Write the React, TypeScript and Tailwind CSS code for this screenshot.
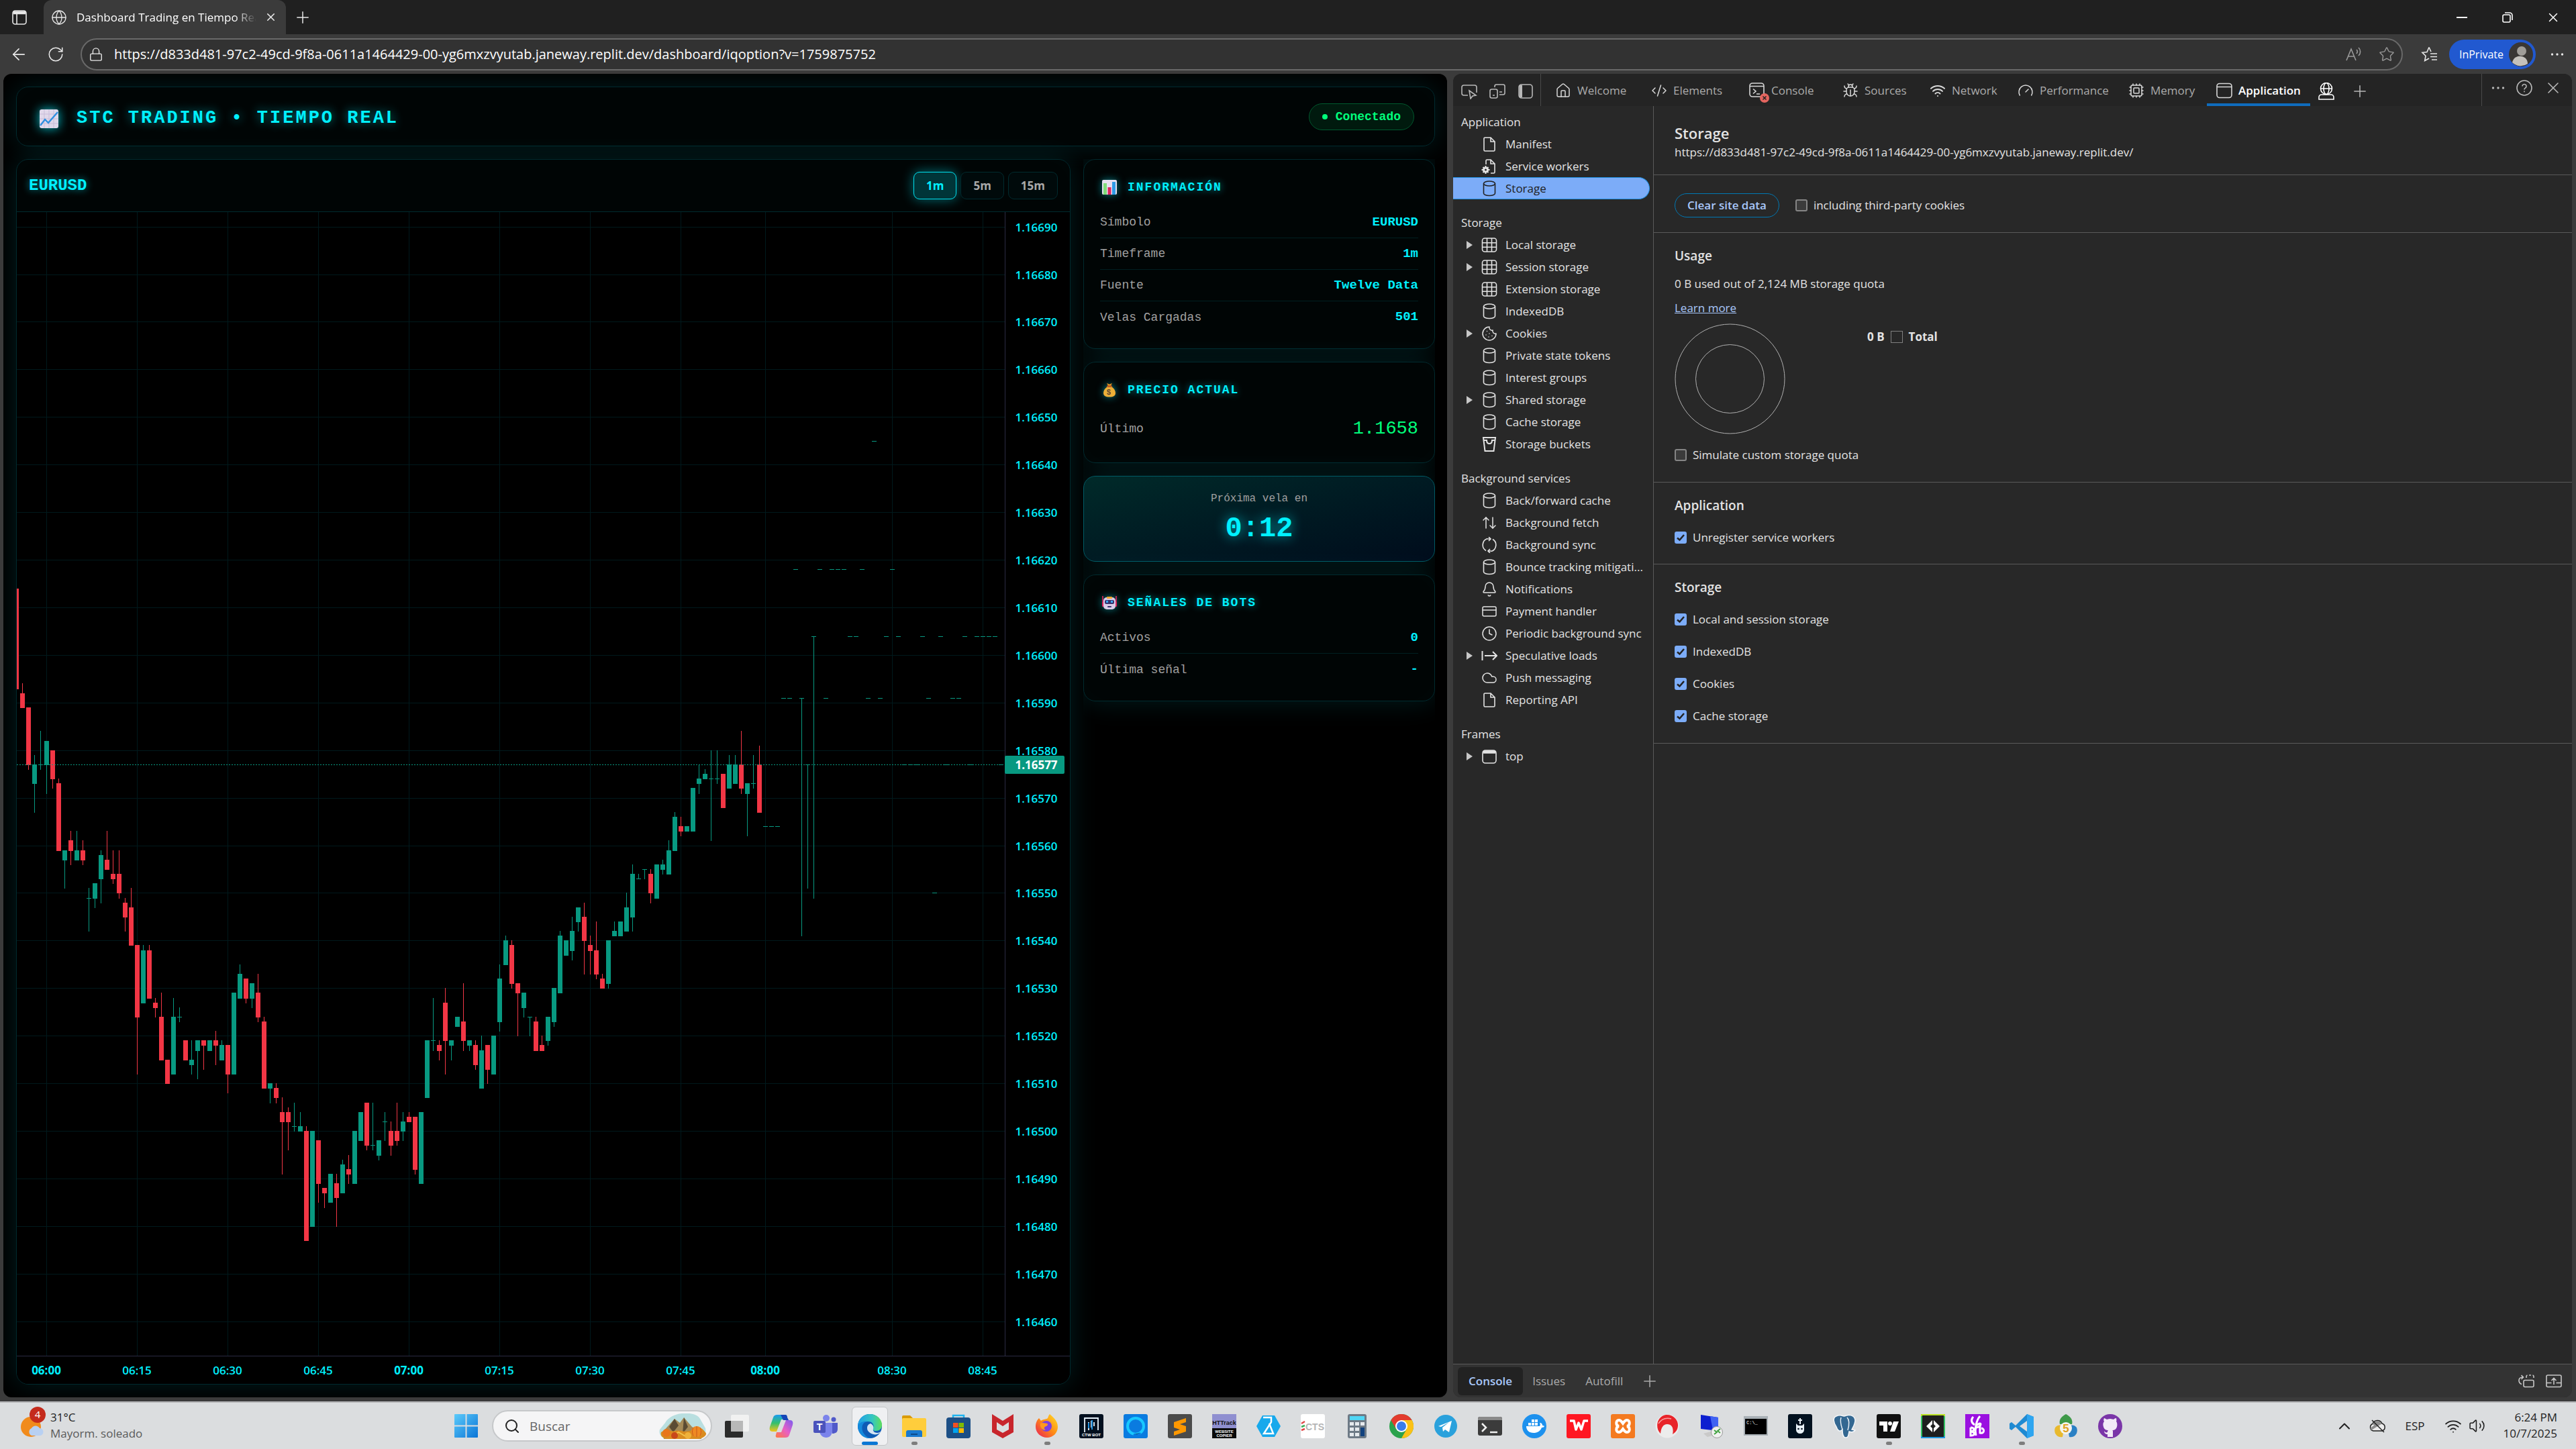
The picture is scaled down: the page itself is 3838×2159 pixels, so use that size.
import { useId, type ReactNode } from "react";
import {
  ArrowDownUp,
  ArrowLeft,
  Bell,
  Bug,
  ChevronUp,
  Clock,
  Cloud,
  CodeXml,
  Cookie,
  Cpu,
  CreditCard,
  Gauge,
  Globe,
  House,
  Lock,
  Plus,
  RotateCw,
  Search,
  Star,
  Volume2,
  Wifi,
  X,
} from "lucide-react";

/* ------------------------------------------------------------------ */
/* Candle data: [high, bodyTop, bodyBottom, low, direction] in points  */
/* above 1.16000. Direction 1 is up, 0 is down.                        */
/* ------------------------------------------------------------------ */
type Candle = [number, number, number, number, 0 | 1];

const FIRST_BAR = -5;
const flat = (v: number): Candle => [v, v, v, v, 1];

const CANDLES: Candle[] = [
  [614, 614, 593, 592, 0], [594, 592, 589, 589, 0], [589, 589, 577, 576, 0], [579, 577, 573, 567, 1],
  [584, 577, 577, 576, 1], [582, 582, 577, 571, 1], [580, 580, 574, 572, 0], [574, 573, 559, 559, 0],
  [559, 559, 557, 551, 1], [563, 561, 559, 556, 0], [563, 559, 557, 557, 1], [561, 559, 557, 556, 0],
  [551, 549, 549, 542, 1], [552, 552, 549, 547, 1], [559, 558, 553, 548, 1], [563, 557, 555, 555, 0],
  [559, 554, 553, 552, 0], [559, 554, 550, 549, 0], [549, 548, 545, 542, 0], [551, 547, 539, 539, 0],
  [539, 539, 524, 512, 0], [539, 538, 527, 527, 1], [539, 538, 528, 528, 0], [528, 527, 526, 524, 0],
  [529, 524, 515, 515, 0], [515, 515, 510, 510, 0], [528, 524, 512, 512, 1], [526, 524, 524, 523, 1],
  [519, 519, 515, 515, 0], [519, 515, 514, 512, 1], [519, 519, 517, 511, 1], [519, 519, 518, 513, 0],
  [519, 519, 517, 517, 1], [521, 519, 518, 514, 0], [519, 518, 515, 515, 1], [518, 518, 512, 508, 0],
  [529, 529, 512, 512, 1], [535, 533, 528, 528, 1], [532, 532, 528, 527, 0], [531, 531, 528, 526, 1],
  [533, 529, 524, 523, 0], [524, 523, 509, 509, 0], [510, 510, 509, 506, 1], [510, 509, 507, 506, 0],
  [507, 504, 502, 491, 0], [505, 504, 502, 496, 0], [506, 501, 501, 500, 1], [504, 501, 500, 500, 1],
  [501, 500, 477, 477, 0], [500, 500, 480, 480, 1], [498, 498, 489, 485, 0], [488, 488, 487, 484, 0],
  [491, 491, 485, 485, 1], [491, 489, 486, 480, 0], [494, 493, 487, 487, 1], [495, 492, 491, 489, 0],
  [500, 500, 489, 489, 1], [504, 504, 498, 498, 1], [506, 506, 497, 496, 0], [506, 497, 497, 496, 1],
  [498, 498, 495, 494, 1], [504, 502, 502, 498, 1], [502, 500, 497, 495, 0], [506, 500, 498, 497, 0],
  [504, 502, 500, 498, 1], [504, 503, 502, 502, 0], [503, 503, 492, 491, 0], [504, 504, 489, 489, 1],
  [519, 519, 507, 507, 1], [528, 519, 519, 517, 1], [519, 518, 517, 515, 0], [530, 527, 519, 512, 0],
  [519, 519, 518, 515, 1], [524, 524, 522, 522, 1], [531, 523, 519, 517, 0], [519, 519, 518, 517, 1],
  [519, 518, 514, 513, 0], [520, 517, 509, 509, 1], [518, 518, 513, 510, 0], [520, 520, 512, 512, 1],
  [535, 532, 523, 521, 1], [541, 540, 535, 535, 1], [540, 539, 531, 530, 0], [531, 531, 529, 520, 0],
  [529, 529, 526, 524, 1], [524, 524, 524, 520, 1], [524, 523, 517, 517, 0], [520, 518, 517, 517, 0],
  [524, 524, 519, 518, 1], [530, 530, 523, 522, 1], [542, 541, 529, 529, 1], [540, 540, 537, 537, 1],
  [545, 542, 538, 536, 1], [547, 547, 544, 542, 1], [548, 545, 540, 533, 0], [541, 539, 538, 533, 0],
  [544, 538, 533, 532, 0], [533, 532, 530, 530, 0], [540, 540, 531, 530, 1], [544, 542, 541, 541, 1],
  [544, 544, 541, 541, 1], [550, 547, 542, 542, 1], [556, 554, 545, 542, 1], [554, 553, 553, 553, 1],
  [555, 555, 555, 553, 1], [555, 554, 550, 548, 0], [556, 556, 549, 549, 1], [557, 556, 555, 554, 1],
  [561, 559, 554, 554, 1], [567, 566, 559, 559, 1], [566, 564, 563, 562, 0], [564, 564, 563, 563, 1],
  [572, 572, 563, 563, 1], [577, 574, 573, 571, 1], [576, 575, 574, 574, 1], [580, 574, 574, 561, 1],
  [580, 574, 574, 573, 1], [575, 575, 568, 568, 0], [579, 577, 572, 572, 1], [579, 577, 573, 573, 1],
  [584, 577, 572, 571, 0], [573, 573, 571, 562, 1], [579, 573, 573, 572, 1], [581, 577, 567, 567, 0],
  flat(564), flat(564), flat(564), flat(591), flat(591), flat(618),
  [591, 591, 591, 541, 1], [577, 577, 577, 551, 1], [604, 604, 604, 549, 1],
  ...[618, 591, 618, 618, 618, 604, 604, 618, 591, 645, 591, 604, 618, 604, 577, 577, 577, 604, 591, 550, 604, 577, 591, 591, 604, 577, 604, 604, 604, 604, 577].map(flat),
];

const TIMES: { bar: number; label: string; strong?: boolean }[] = [
  { bar: 0, label: "06:00", strong: true },
  { bar: 15, label: "06:15" },
  { bar: 30, label: "06:30" },
  { bar: 45, label: "06:45" },
  { bar: 60, label: "07:00", strong: true },
  { bar: 75, label: "07:15" },
  { bar: 90, label: "07:30" },
  { bar: 105, label: "07:45" },
  { bar: 119, label: "08:00", strong: true },
  { bar: 140, label: "08:30" },
  { bar: 155, label: "08:45" },
];

const PRICES = Array.from({ length: 24 }, (_, i) => 690 - i * 10);
const UP = "#089981";
const DOWN = "#f23645";
const PLOT_W = 1472;
const PLOT_H = 1704;
const barX = (bar: number) => 44 + bar * 9;
const priceY = (v: number) => Math.round(21.6 + (690 - v) * 7.092);

function PriceChart() {
  return (
    <svg className="h-full w-full font-['Open_Sans',sans-serif] text-[17px] font-semibold" role="img" aria-label="EURUSD 1m">
      <g stroke="#00191c" strokeWidth="1" shapeRendering="crispEdges">
        {PRICES.map((p) => (
          <line key={p} x1="0" x2={PLOT_W} y1={priceY(p) + 0.5} y2={priceY(p) + 0.5} />
        ))}
        {TIMES.map((t) => (
          <line key={t.label} x1={barX(t.bar) + 0.5} x2={barX(t.bar) + 0.5} y1="0" y2={PLOT_H} />
        ))}
      </g>
      <g shapeRendering="crispEdges">
        {CANDLES.map(([h, top, bottom, l, up], i) => {
          const x = barX(i + FIRST_BAR);
          const fill = up ? UP : DOWN;
          return (
            <g key={i} fill={fill}>
              <rect x={x} y={priceY(h)} width="1" height={priceY(l) - priceY(h) + 1} />
              <rect x={x - 3} y={priceY(top)} width="7" height={priceY(bottom) - priceY(top) + 1} />
            </g>
          );
        })}
        <line x1="0" x2={PLOT_W} y1={priceY(577) + 0.5} y2={priceY(577) + 0.5} stroke={UP} strokeDasharray="2 2" />
        <rect x={PLOT_W} y="0" width="1" height={PLOT_H} fill="#2b2b43" />
        <rect x="0" y={PLOT_H} width="1569" height="1" fill="#2b2b43" />
      </g>
      <g fill="#00f0ff" dominantBaseline="central" textAnchor="middle">
        {PRICES.map((p) => (
          <text key={p} x="1519" y={priceY(p)}>{`1.16${p}`}</text>
        ))}
        {TIMES.map((t) => (
          <text key={t.label} x={barX(t.bar)} y="1725" className={t.strong ? "font-bold" : ""}>
            {t.label}
          </text>
        ))}
        <rect x={PLOT_W} y="810" width="89" height="27" rx="2" fill={UP} />
        <text x="1519" y="823" fill="#ffffff" className="font-bold">1.16577</text>
      </g>
    </svg>
  );
}

/* ----------------------------- emoji -------------------------------- */
function TrendEmoji() {
  return (
    <svg viewBox="0 0 28 28" className="size-7 drop-shadow-[0_0_8px_rgba(0,240,255,0.8)]" aria-hidden="true">
      <rect width="28" height="28" rx="3" fill="#e0d8ea" />
      <path d="M0 7h28M0 14h28M0 21h28M7 0v28M14 0v28M21 0v28" stroke="#c9bdd8" strokeWidth="1" />
      <path d="M1 24l7-9 5 5L27 4" fill="none" stroke="#2f8fe0" strokeWidth="2.4" />
    </svg>
  );
}
function BarsEmoji() {
  return (
    <svg viewBox="0 0 22 22" className="size-[22px]" aria-hidden="true">
      <rect width="22" height="22" rx="2" fill="#e6dff0" />
      <rect x="2" y="5" width="5" height="17" fill="#7fdc7a" />
      <rect x="8.500" y="11" width="5" height="11" fill="#e0245e" />
      <rect x="15" y="3" width="5" height="19" fill="#2f9be6" />
    </svg>
  );
}
function MoneyEmoji() {
  return (
    <svg viewBox="0 0 22 22" className="size-[22px]" aria-hidden="true">
      <path d="M7 1l4 1.500L15 1l-2 4H9z" fill="#e08a1c" />
      <path d="M8 6h6c4 3 6 6 6 9.500 0 4-3 6-9 6s-9-2-9-6C2 12 4 9 8 6z" fill="#f6ac2f" />
      <rect x="7" y="4.500" width="8" height="2.500" rx="1" fill="#c4581a" />
      <text x="11" y="18" textAnchor="middle" fontSize="11" fontWeight="700" fill="#5b4332" fontFamily="Liberation Sans">$</text>
    </svg>
  );
}
function RobotEmoji() {
  return (
    <svg viewBox="0 0 22 22" className="size-[22px]" aria-hidden="true">
      <path d="M1 1v8M21 1v8" stroke="#e0245e" strokeWidth="1.600" />
      <rect x="0" y="9" width="3" height="8" rx="1" fill="#e0245e" />
      <rect x="19" y="9" width="3" height="8" rx="1" fill="#e0245e" />
      <rect x="2" y="3" width="18" height="18" rx="5" fill="#d8cbe8" />
      <rect x="7" y="2" width="8" height="3" rx="1" fill="#f4a72c" />
      <rect x="4" y="7" width="14" height="6" rx="2" fill="#37306b" />
      <rect x="6" y="8" width="3" height="3" fill="#3ba7f5" />
      <rect x="13" y="8" width="3" height="3" fill="#3ba7f5" />
      <rect x="8" y="16" width="6" height="2" rx="1" fill="#37306b" />
    </svg>
  );
}

/* --------------------------- dashboard ------------------------------ */
const cardClass =
  "rounded-[18px] border border-[#002a2e] bg-[#000505] shadow-[0_0_40px_rgba(0,240,255,0.12),inset_0_0_40px_rgba(0,240,255,0.015)]";

function Row({ label, value, last, big }: { label: string; value: string; last?: boolean; big?: boolean }) {
  return (
    <div className={`flex items-center justify-between ${big ? "h-14 pt-0.5" : "h-[47px]"} ${last ? "" : "border-b border-[#001f21]"}`}>
      <dt className="text-lg text-[#a0a0a0]">{label}</dt>
      {big ? (
        <dd className="text-[27px] text-[#00ff7b]">{value}</dd>
      ) : (
        <dd className="text-[19px] font-bold text-[#00f0ff]">{value}</dd>
      )}
    </div>
  );
}

function InfoCard({ icon, title, children }: { icon: ReactNode; title: string; children: ReactNode }) {
  return (
    <section className={`${cardClass} px-6 pt-6 pb-[23px]`}>
      <h2 className="mb-[19px] flex h-[27px] items-center gap-4 pl-[3px] pt-1.5 text-lg font-bold tracking-[2px] text-[#00f0ff] [text-shadow:0_0_12px_rgba(0,240,255,0.6)]">
        <span className="drop-shadow-[0_0_6px_rgba(0,240,255,0.5)]">{icon}</span>
        {title}
      </h2>
      <dl>{children}</dl>
    </section>
  );
}

function TimeButton({ label, active }: { label: string; active?: boolean }) {
  return (
    <button
      type="button"
      className={`h-[41px] rounded-[9px] border px-[18px] text-[17px] font-bold font-['Open_Sans',sans-serif] ${
        active
          ? "border-[#00e0ee] bg-[#003538] text-[#00f0ff] shadow-[0_0_18px_rgba(0,240,255,0.45)]"
          : "border-[#002a2e] bg-[#000a0b] text-[#a8a8a8]"
      }`}
    >
      {label}
    </button>
  );
}

function Dashboard() {
  return (
    <main className="flex min-h-0 min-w-0 flex-col gap-[19px] overflow-hidden rounded-xl bg-black p-[19px] pr-[18px] font-['Liberation_Mono',monospace]">
      <header className={`${cardClass} flex h-[89px] shrink-0 items-center justify-between px-[30px]`}>
        <h1 className="flex items-center gap-[27px] pl-1 pt-1.5 text-[27px] font-bold tracking-[3px] text-[#00f0ff] [text-shadow:0_0_15px_rgba(0,240,255,0.6)]">
          <TrendEmoji />
          STC TRADING • TIEMPO REAL
        </h1>
        <p className="flex h-10 items-center gap-3 rounded-full border border-[#00592f] bg-[#001a0e] px-[19px] text-lg font-bold text-[#00ff7b]">
          <span className="size-2 rounded-full bg-[#00ff7b]" />
          Conectado
        </p>
      </header>

      <div className="flex min-h-0 flex-1 gap-[19px]">
        <section className={`${cardClass} flex min-w-0 flex-1 flex-col overflow-hidden`}>
          <div className="flex h-[78px] shrink-0 items-center justify-between border-b border-[#002a2e] px-[18px]">
            <h2 className="text-2xl font-bold text-[#00f0ff] [text-shadow:0_0_12px_rgba(0,240,255,0.6)]">EURUSD</h2>
            <div className="flex gap-1.5">
              <TimeButton label="1m" active />
              <TimeButton label="5m" />
              <TimeButton label="15m" />
            </div>
          </div>
          <div className="min-h-0 flex-1 bg-black">
            <PriceChart />
          </div>
        </section>

        <aside className="flex min-h-0 w-[524px] flex-col gap-[19px] overflow-hidden">
          <InfoCard icon={<BarsEmoji />} title="INFORMACIÓN">
            <Row label="Símbolo" value="EURUSD" />
            <Row label="Timeframe" value="1m" />
            <Row label="Fuente" value="Twelve Data" />
            <Row label="Velas Cargadas" value="501" last />
          </InfoCard>
          <InfoCard icon={<MoneyEmoji />} title="PRECIO ACTUAL">
            <Row label="Último" value="1.1658" last big />
          </InfoCard>
          <section className="flex h-32 flex-col items-center rounded-[18px] border border-[#005a64] bg-linear-to-br from-[#002a29] to-[#000c1c] pt-[21px] shadow-[0_0_40px_rgba(0,240,255,0.12)]">
            <p className="text-base text-[#a0a0a0]">Próxima vela en</p>
            <p className="text-[42px] leading-[66px] font-bold text-[#00f0ff] [text-shadow:0_0_18px_rgba(0,240,255,0.7)]">0:12</p>
          </section>
          <InfoCard icon={<RobotEmoji />} title="SEÑALES DE BOTS">
            <Row label="Activos" value="0" />
            <Row label="Última señal" value="-" last />
          </InfoCard>
        </aside>
      </div>
    </main>
  );
}

/* --------------------------- dev tools ------------------------------ */
const stroke = { fill: "none", stroke: "currentColor", strokeWidth: 1.6 } as const;

const FileIcon = () => (
  <svg viewBox="0 0 24 24" className="size-6" {...stroke}>
    <path d="M4 3.500A1.500 1.500 0 0 1 5.500 2H14l6 6v12.500a1.500 1.500 0 0 1-1.500 1.500h-13A1.500 1.500 0 0 1 4 20.500zM14 2v6h6" />
  </svg>
);
const WorkerIcon = () => (
  <svg viewBox="0 0 24 24" className="size-6" {...stroke}>
    <path d="M7 9V3.500A1.500 1.500 0 0 1 8.500 2H14l6 6v12.500a1.500 1.500 0 0 1-1.500 1.500H14M14 2v6h6" />
    <circle cx="6.500" cy="17" r="3" strokeWidth="3" />
    <path d="M6.500 11v3M6.500 20v3M.5 17h3M9.500 17h3M2.500 13l2 2M8.500 19l2 2M10.500 13l-2 2M4.500 19l-2 2" strokeWidth="2" />
  </svg>
);
const DbIcon = () => (
  <svg viewBox="0 0 24 24" className="size-6" {...stroke}>
    <ellipse cx="12" cy="4.500" rx="8.500" ry="3.500" />
    <path d="M3.500 4.500v14.500c0 2 3.800 3.500 8.500 3.500s8.500-1.500 8.500-3.500V4.500" />
  </svg>
);
const GridIcon = () => (
  <svg viewBox="0 0 24 24" className="size-6" {...stroke}>
    <rect x="1.500" y="2" width="21" height="20" rx="3.500" />
    <path d="M8.500 2v20M15.500 2v20M1.500 8.700h21M1.500 15.300h21" />
  </svg>
);
const BucketIcon = () => (
  <svg viewBox="0 0 24 24" className="size-6" {...stroke}>
    <path d="M3 2h18l-2.500 20h-13zM4 6h4c0 3 1.500 5 4 5s4-2 4-5h4" strokeWidth="2" />
  </svg>
);
const WindowIcon = () => (
  <svg viewBox="0 0 24 24" className="size-6" {...stroke}>
    <rect x="2" y="3" width="20" height="19" rx="4" />
    <path d="M3 5.500h18" strokeWidth="4.500" />
  </svg>
);
const AppTabIcon = () => (
  <svg viewBox="0 0 24 24" className="size-6" {...stroke}>
    <rect x="1" y="1.500" width="22" height="21" rx="4" />
    <path d="M1 6.500h22" />
  </svg>
);
const SpecIcon = () => (
  <svg viewBox="0 0 24 24" className="size-6" {...stroke} strokeWidth="2">
    <path d="M1.500 5v14M5 12h18M17 6l6 6-6 6" />
  </svg>
);
const SyncIcon = () => (
  <svg viewBox="0 0 24 24" className="size-6" {...stroke}>
    <path d="M9 2.500A10 10 0 0 0 7 20.500M15 21.500A10 10 0 0 0 17 3.500M11 0l3 3-3 3M13 18l-3 3 3 3M9 3h5M15 21h-5" />
  </svg>
);

const lu = { className: "size-6", strokeWidth: 1.5 } as const;

type Item = { label: string; icon: ReactNode; arrow?: boolean; selected?: boolean };
const GROUPS: { title: string; items: Item[] }[] = [
  {
    title: "Application",
    items: [
      { label: "Manifest", icon: <FileIcon /> },
      { label: "Service workers", icon: <WorkerIcon /> },
      { label: "Storage", icon: <DbIcon />, selected: true },
    ],
  },
  {
    title: "Storage",
    items: [
      { label: "Local storage", icon: <GridIcon />, arrow: true },
      { label: "Session storage", icon: <GridIcon />, arrow: true },
      { label: "Extension storage", icon: <GridIcon /> },
      { label: "IndexedDB", icon: <DbIcon /> },
      { label: "Cookies", icon: <Cookie {...lu} />, arrow: true },
      { label: "Private state tokens", icon: <DbIcon /> },
      { label: "Interest groups", icon: <DbIcon /> },
      { label: "Shared storage", icon: <DbIcon />, arrow: true },
      { label: "Cache storage", icon: <DbIcon /> },
      { label: "Storage buckets", icon: <BucketIcon /> },
    ],
  },
  {
    title: "Background services",
    items: [
      { label: "Back/forward cache", icon: <DbIcon /> },
      { label: "Background fetch", icon: <ArrowDownUp {...lu} className="size-6 -scale-x-100" /> },
      { label: "Background sync", icon: <SyncIcon /> },
      { label: "Bounce tracking mitigati...", icon: <DbIcon /> },
      { label: "Notifications", icon: <Bell {...lu} /> },
      { label: "Payment handler", icon: <CreditCard {...lu} /> },
      { label: "Periodic background sync", icon: <Clock {...lu} /> },
      { label: "Speculative loads", icon: <SpecIcon />, arrow: true },
      { label: "Push messaging", icon: <Cloud {...lu} /> },
      { label: "Reporting API", icon: <FileIcon /> },
    ],
  },
  { title: "Frames", items: [{ label: "top", icon: <WindowIcon />, arrow: true }] },
];

function Sidebar() {
  return (
    <nav className="flex w-[299px] shrink-0 flex-col gap-[18px] overflow-hidden border-r border-[#5a5a5a] pt-[7px] text-[17px] text-[#e3e3e3]">
      {GROUPS.map((g) => (
        <div key={g.title}>
          <h3 className="flex h-[33px] items-center pl-3">{g.title}</h3>
          <ul>
            {g.items.map((it) => (
              <li
                key={it.label}
                className={`mr-[5px] flex h-[33px] items-center rounded-r-full ${
                  it.selected ? "border-y border-r border-[#1f8fe0] bg-[#7cacf8] text-[#222222]" : ""
                }`}
              >
                <span className="flex w-[42px] justify-center pl-1.5">
                  {it.arrow && (
                    <svg viewBox="0 0 9 12" className="h-3 w-[9px]" aria-hidden="true">
                      <path d="M0 0l9 6-9 6z" fill="#c7c7c7" />
                    </svg>
                  )}
                </span>
                <span className="shrink-0">{it.icon}</span>
                <span className="min-w-0 flex-1 pl-3 whitespace-nowrap">{it.label}</span>
              </li>
            ))}
          </ul>
        </div>
      ))}
    </nav>
  );
}

function Check({ label, checked }: { label: string; checked?: boolean }) {
  const id = useId();
  return (
    <div className="flex h-6 items-center gap-[9px]">
      <span className="relative flex">
        <input
          id={id}
          type="checkbox"
          defaultChecked={checked}
          className="peer size-[18px] appearance-none rounded-[3px] border-2 border-[#858585] bg-[#3b3b3b] checked:border-[#7cacf8] checked:bg-[#7cacf8]"
        />
        <svg viewBox="0 0 18 18" className="pointer-events-none absolute inset-0 hidden size-[18px] peer-checked:block" aria-hidden="true">
          <path d="M4 9.500l3.500 3L14 5" fill="none" stroke="#222" strokeWidth="2.500" />
        </svg>
      </span>
      <label htmlFor={id}>{label}</label>
    </div>
  );
}

function StoragePane() {
  const line = "border-b border-[#5a5a5a] px-[31px]";
  return (
    <div className="min-w-0 flex-1 text-[17px] text-[#e3e3e3]">
      <section className={`${line} pt-6 pb-5`}>
        <h2 className="text-[22px] leading-8 font-semibold">Storage</h2>
        <p className="leading-[26px]">https://d833d481-97c2-49cd-9f8a-0611a1464429-00-yg6mxzvyutab.janeway.replit.dev/</p>
      </section>
      <section className={`${line} flex h-[86px] items-center gap-6 pt-1`}>
        <button type="button" className="h-9 rounded-full border border-[#0078b4] px-[18px] font-semibold text-[#a8c7fa]">
          Clear site data
        </button>
        <Check label="including third-party cookies" />
      </section>
      <section className={`${line} h-[372px] pt-[18px]`}>
        <h3 className="text-[19px] leading-8 font-semibold">Usage</h3>
        <p className="mt-3.5 leading-6">0 B used out of 2,124 MB storage quota</p>
        <a href="#learn" className="mt-3 inline-block leading-6 text-[#a8c7fa] underline">Learn more</a>
        <div className="mt-2.5 flex h-[164px] gap-[122px]">
          <svg viewBox="0 0 165 165" className="size-[165px]" fill="none" stroke="#b0b0b0" aria-hidden="true">
            <circle cx="82.500" cy="82.500" r="81.500" />
            <circle cx="82.500" cy="82.500" r="51" />
          </svg>
          <p className="mt-2 flex h-6 items-center gap-[9px] font-bold">
            0 B <span className="size-[18px] border border-[#808080]" /> Total
          </p>
        </div>
        <div className="mt-5">
          <Check label="Simulate custom storage quota" />
        </div>
      </section>
      <section className={`${line} h-[122px] pt-[18px]`}>
        <h3 className="text-[19px] leading-8 font-semibold">Application</h3>
        <div className="mt-5">
          <Check label="Unregister service workers" checked />
        </div>
      </section>
      <section className={`${line} h-[267px] pt-[18px]`}>
        <h3 className="text-[19px] leading-8 font-semibold">Storage</h3>
        <div className="mt-5 flex flex-col gap-6">
          <Check label="Local and session storage" checked />
          <Check label="IndexedDB" checked />
          <Check label="Cookies" checked />
          <Check label="Cache storage" checked />
        </div>
      </section>
    </div>
  );
}

function Tab({ icon, label, width, active }: { icon: ReactNode; label: string; width: string; active?: boolean }) {
  return (
    <button
      type="button"
      className={`flex h-12 items-center gap-[9px] border-b-4 pt-1.5 pl-3.5 ${width} ${
        active ? "border-[#0f6cbd] font-semibold text-white" : "border-transparent text-[#ababab]"
      }`}
    >
      <span className="text-[#d8d8d8]">{icon}</span>
      {label}
    </button>
  );
}

const ConsoleIcon = () => (
  <span className="relative block">
    <svg viewBox="0 0 24 24" className="size-6" {...stroke}>
      <rect x="1" y="1" width="21" height="20" rx="4" />
      <path d="M1 5.500h21M6 9.500l4 3.500-4 3.500M11 17h5" />
    </svg>
    <svg viewBox="0 0 14 14" className="absolute -right-1.5 -bottom-1.5 size-3.5" aria-hidden="true">
      <circle cx="7" cy="7" r="7" fill="#e4655f" />
      <path d="M4.500 4.500l5 5M9.500 4.500l-5 5" stroke="#222" strokeWidth="1.500" />
    </svg>
  </span>
);
const InspectIcon = () => (
  <svg viewBox="0 0 24 24" className="size-6" {...stroke}>
    <path d="M10 18H4a3 3 0 0 1-3-3V6a3 3 0 0 1 3-3h16a3 3 0 0 1 3 3v8M12 11l10 7-5 1-3 4z" />
  </svg>
);
const DevicesIcon = () => (
  <svg viewBox="0 0 24 24" className="size-6" {...stroke}>
    <rect x="1" y="9" width="11" height="13" rx="2.500" />
    <path d="M8 6V4.500A2.500 2.500 0 0 1 10.500 2h10A2.500 2.500 0 0 1 23 4.500v10a2.500 2.500 0 0 1-2.500 2.500H15M5 18h3M15 13h4" />
  </svg>
);
const DockIcon = () => (
  <svg viewBox="0 0 24 24" className="size-6" {...stroke}>
    <rect x="2" y="2" width="20" height="20" rx="4" />
    <path d="M5 3v18" strokeWidth="4" />
  </svg>
);
const GlobeStandIcon = () => (
  <svg viewBox="0 0 24 26" className="h-[26px] w-6" {...stroke}>
    <circle cx="12" cy="9" r="8.500" />
    <ellipse cx="12" cy="9" rx="4" ry="8.500" />
    <path d="M3.500 9h17M1 25v-3a4 4 0 0 1 4-4h14a4 4 0 0 1 4 4v3z" />
  </svg>
);
const Dots = () => (
  <svg viewBox="0 0 20 6" className="h-1.5 w-5" fill="currentColor" aria-hidden="true">
    <circle cx="2.500" cy="3" r="1.700" />
    <circle cx="10" cy="3" r="1.700" />
    <circle cx="17.500" cy="3" r="1.700" />
  </svg>
);

function DevTools() {
  return (
    <section className="flex min-h-0 min-w-0 flex-col overflow-hidden rounded-xl bg-[#282828]" aria-label="DevTools">
      <div className="flex h-12 shrink-0 items-center bg-[#242424] text-[17px] text-[#b8b8b8]">
        <div className="flex h-full items-center gap-[18px] border-r border-[#4a4a4a] px-3 pt-1 pr-2.5">
          <button type="button" aria-label="Inspect"><InspectIcon /></button>
          <button type="button" aria-label="Devices"><DevicesIcon /></button>
          <button type="button" aria-label="Dock side"><DockIcon /></button>
        </div>
        <div className="flex h-full flex-1 items-center pl-[7px]">
          <Tab width="min-w-[143px]" label="Welcome" icon={<House {...lu} />} />
          <Tab width="min-w-[146px]" label="Elements" icon={<CodeXml {...lu} />} />
          <Tab width="min-w-[139px]" label="Console" icon={<ConsoleIcon />} />
          <Tab width="min-w-[130px]" label="Sources" icon={<Bug {...lu} />} />
          <Tab width="min-w-[131px]" label="Network" icon={<Wifi className="size-6" strokeWidth={2} />} />
          <Tab width="min-w-[165px]" label="Performance" icon={<Gauge {...lu} />} />
          <Tab width="min-w-[131px]" label="Memory" icon={<Cpu {...lu} />} />
          <Tab width="min-w-[154px]" label="Application" active icon={<AppTabIcon />} />
          <button type="button" aria-label="More tools" className="pt-1 pl-3 text-white"><GlobeStandIcon /></button>
          <button type="button" aria-label="Add tool" className="pt-1 pl-6"><Plus className="size-7" strokeWidth={1.3} /></button>
        </div>
        <div className="flex h-full items-center gap-[17px] border-l border-[#4a4a4a] pr-3.5 pb-1.5 pl-3.5">
          <button type="button" aria-label="Menu"><Dots /></button>
          <button type="button" aria-label="Help">
            <svg viewBox="0 0 24 24" className="size-6" {...stroke}>
              <circle cx="12" cy="12" r="11" />
              <path d="M9 9.500a3 3 0 1 1 4.500 2.600c-1 .6-1.500 1-1.500 2.400M12 16.500v1.800" />
            </svg>
          </button>
          <button type="button" aria-label="Close DevTools"><X className="size-7" strokeWidth={1.3} /></button>
        </div>
      </div>
      <div className="flex min-h-0 flex-1">
        <Sidebar />
        <StoragePane />
      </div>
      <div className="flex h-[50px] shrink-0 items-center border-t border-[#5a5a5a] bg-[#333333] px-[7px] text-[17px] text-[#ababab]">
        <button type="button" className="h-[42px] rounded-md bg-[#222222] px-4 font-semibold text-[#a8c7fa]">Console</button>
        <button type="button" className="px-3.5">Issues</button>
        <button type="button" className="px-4">Autofill</button>
        <button type="button" aria-label="Add drawer tool" className="px-2.5"><Plus className="size-7" strokeWidth={1.3} /></button>
        <span className="flex-1" />
        <div className="flex gap-[17px] pr-2 text-[#c8c8c8]">
          <button type="button" aria-label="Reopen">
            <svg viewBox="0 0 24 20" className="h-5 w-6" {...stroke}>
              <rect x="8" y="8.500" width="15" height="10" rx="2" />
              <path d="M12 5V3a2 2 0 0 1 1.500-2M16 1h3M21.500 1A2 2 0 0 1 23 3v2M5 14.500C2.500 13.500 1 11.500 1 9c0-3 2-5 6-5M4.500 1l3 3-3 3" />
            </svg>
          </button>
          <button type="button" aria-label="Expand drawer">
            <svg viewBox="0 0 24 20" className="h-5 w-6" {...stroke}>
              <rect x="1" y="1" width="22" height="17.500" rx="2" />
              <path d="M1 12.500h7.500M15.500 12.500H23M12 15V5.500M8.500 9L12 5.500 15.500 9" />
            </svg>
          </button>
        </div>
      </div>
    </section>
  );
}

/* ------------------------- browser chrome --------------------------- */
function BrowserTop() {
  return (
    <header className="shrink-0 text-[#e8e8e8]">
      <div className="flex h-[51px] bg-[#202020]">
        <button type="button" aria-label="Tab actions" className="flex w-[65px] items-center justify-center pr-2">
          <svg viewBox="0 0 22 22" className="size-[22px]" {...stroke}>
            <rect x="1" y="1" width="20" height="20" rx="3.500" />
            <path d="M7 6v15" />
            <path d="M2 4h18" strokeWidth="4.500" />
          </svg>
        </button>
        <div className="flex w-[361px] items-center rounded-t-xl bg-[#3b3b3b] pr-3 pl-[11px]">
          <Globe className="size-6 shrink-0" strokeWidth={1.3} />
          <span className="ml-3.5 w-[268px] overflow-hidden text-[17px] whitespace-nowrap text-white [mask-image:linear-gradient(to_right,black_88%,transparent)]">
            Dashboard Trading en Tiempo Real
          </span>
          <button type="button" aria-label="Close tab" className="ml-3"><X className="size-[19px]" strokeWidth={2} /></button>
        </div>
        <button type="button" aria-label="New tab" className="px-[11px]"><Plus className="size-7" strokeWidth={1.3} /></button>
        <span className="flex-1" />
        <div className="flex items-center">
          <button type="button" aria-label="Minimize" className="flex w-[68px] justify-center"><span className="h-0.5 w-4 bg-white" /></button>
          <button type="button" aria-label="Restore" className="flex w-[68px] justify-center">
            <svg viewBox="0 0 16 16" className="size-4 text-white" {...stroke}>
              <rect x="1" y="4" width="11" height="11" rx="2" />
              <path d="M4 1h7a4 4 0 0 1 4 4v7" />
            </svg>
          </button>
          <button type="button" aria-label="Close" className="flex w-[68px] justify-center"><X className="size-[22px] text-white" strokeWidth={1.6} /></button>
        </div>
      </div>
      <div className="flex h-[59px] items-center bg-[#3b3b3b] pr-[18px] pl-3.5">
        <button type="button" aria-label="Back"><ArrowLeft className="size-7" strokeWidth={1.5} /></button>
        <button type="button" aria-label="Reload" className="ml-7"><RotateCw className="size-[26px]" strokeWidth={1.4} /></button>
        <div className="ml-6 flex h-12 flex-1 items-center rounded-full border-2 border-[#696969] bg-[#323232] pr-2.5 pl-2.5">
          <Lock className="size-[22px] shrink-0" strokeWidth={1.5} />
          <input
            aria-label="Address"
            className="ml-4 h-full flex-1 bg-transparent text-xl text-white outline-none"
            defaultValue="https://d833d481-97c2-49cd-9f8a-0611a1464429-00-yg6mxzvyutab.janeway.replit.dev/dashboard/iqoption?v=1759875752"
          />
          <button type="button" aria-label="Read aloud" className="text-[#9a9a9a]">
            <svg viewBox="0 0 26 24" className="h-6 w-[26px]" {...stroke}>
              <path d="M2 21L9 4l7 17M4.500 15h9M17 5c1.500 1.500 1.500 4 0 6M20 2c3.500 3 3.500 9 0 12" />
            </svg>
          </button>
          <button type="button" aria-label="Favorite" className="ml-6 text-[#9a9a9a]"><Star className="size-6" strokeWidth={1.4} /></button>
        </div>
        <button type="button" aria-label="Favorites" className="ml-[27px]">
          <svg viewBox="0 0 26 24" className="h-6 w-[26px]" {...stroke}>
            <path d="M12 1.500l-3 7-7 .8 5 5-1.300 7.200L12 18M12 1.500l3 6.500M14 11h10M14 15.500h10M16 20h8" />
          </svg>
        </button>
        <button type="button" className="ml-4 flex h-11 items-center gap-2 rounded-full bg-[#2159d0] pr-1 pl-[15px] text-[16px] text-white">
          InPrivate
          <svg viewBox="0 0 36 36" className="size-9" aria-hidden="true">
            <circle cx="18" cy="18" r="18" fill="#3a3734" />
            <circle cx="19" cy="13" r="7" fill="#a09d98" />
            <path d="M5 30c2-8 8-10 14-9s9 6 9 11a18 18 0 0 1-23-2z" fill="#c4c1bc" />
          </svg>
        </button>
        <button type="button" aria-label="Settings" className="ml-[22px]"><Dots /></button>
      </div>
    </header>
  );
}

/* ----------------------------- taskbar ------------------------------ */
function App36({ bg, children }: { bg?: string; children: ReactNode }) {
  return (
    <svg viewBox="0 0 36 36" className="size-9" aria-hidden="true">
      {bg && <rect width="36" height="36" rx="3" fill={bg} />}
      {children}
    </svg>
  );
}

const APPS: { name: string; art: ReactNode; running?: boolean; active?: boolean }[] = [
  { name: "Task view", art: <App36><rect x="0" y="10" width="27" height="25" rx="2" fill="#2b2b2b" /><rect x="9" y="1" width="27" height="25" rx="2" fill="#f4f4f4" opacity=".85" /><rect x="9" y="10" width="18" height="16" fill="#b8b8b8" /></App36> },
  { name: "Copilot", art: <App36><defs><linearGradient id="cpa" x1="0" y1="0" x2="0" y2="1"><stop offset="0" stopColor="#1a9bf0" /><stop offset=".5" stopColor="#35c06c" /><stop offset="1" stopColor="#f5c518" /></linearGradient><linearGradient id="cpb" x1="1" y1="0" x2="0" y2="1"><stop offset="0" stopColor="#7a5cf0" /><stop offset=".5" stopColor="#e85fc4" /><stop offset="1" stopColor="#ff7a3c" /></linearGradient></defs><path d="M12 1h12c2 0 3 2 2 4l-1 3h-7l-7 18H5c-4 0-5-3-4-7L6 5c1-3 3-4 6-4z" fill="url(#cpa)" /><path d="M17 1h7c2 0 3 2 3 4l2 4h-8z" fill="#1546b8" /><path d="M24 35H12c-2 0-3-2-2-4l1-4h7l7-18h6c4 0 5 3 4 7l-5 15c-1 3-3 4-6 4z" fill="url(#cpb)" /></App36> },
  { name: "Teams", art: <App36><circle cx="19" cy="6" r="5" fill="#7b83eb" /><circle cx="30" cy="8" r="3.500" fill="#5059c9" /><path d="M24 13h12v9c0 5-3 7-8 7z" fill="#5059c9" /><path d="M9 13h19v12c0 6-4 10-9 10s-10-4-10-10z" fill="#7b83eb" /><rect x="0" y="10" width="18" height="18" rx="2" fill="#4b53bc" /><text x="9" y="24" textAnchor="middle" fontSize="14" fontWeight="700" fill="#fff" fontFamily="Liberation Sans">T</text></App36> },
  { name: "Edge", active: true, art: <App36><defs><linearGradient id="ega" x1="0" y1="0" x2="1" y2="0"><stop offset="0" stopColor="#1f9fe8" /><stop offset=".6" stopColor="#35c6c0" /><stop offset="1" stopColor="#5fdf5a" /></linearGradient></defs><circle cx="18" cy="18" r="18" fill="#0d5bb5" /><path d="M0 17C1 7 8 0 18 0c11 0 18 8 18 16 0 6-4 9-9 9-4 0-5-2-4-4 2-5-1-10-8-10C8 11 2 14 0 17z" fill="url(#ega)" /><path d="M15 11c-7 0-10 7-8 14 2 6 7 10 13 11C7 37 0 28 0 17c3-5 9-7 15-6z" fill="#1389dc" /><path d="M14 21c0-4 2-6 5-7 4 2 5 5 4 8s2 6 6 6c2 0 4-1 5-2l-1 2c-4 3-9 3-13 1-3-2-6-4-6-8z" fill="#e9f3fa" opacity=".9" /></App36> },
  { name: "Explorer", running: true, art: <App36><path d="M0 4a2 2 0 0 1 2-2h10l4 4v8H0z" fill="#d99a08" /><rect x="0" y="6" width="36" height="28" rx="2" fill="#ffcd3c" /><path d="M6 34V27a3 3 0 0 1 3-3h18a3 3 0 0 1 3 3v7z" fill="#1979cf" /><path d="M13 30h10" stroke="#0b4a8a" strokeWidth="2" /></App36> },
  { name: "Store", art: <App36><path d="M10 7V2h16v5" fill="none" stroke="#1fb4f0" strokeWidth="2.500" /><rect x="0" y="5" width="36" height="31" rx="4" fill="#1c4f86" /><rect x="10" y="13" width="7.500" height="7" fill="#f25022" /><rect x="18.500" y="13" width="7.500" height="7" fill="#7fba00" /><rect x="10" y="21" width="7.500" height="7" fill="#00a4ef" /><rect x="18.500" y="21" width="7.500" height="7" fill="#ffb900" /></App36> },
  { name: "McAfee", art: <App36><path d="M2 0l16 10L34 0v27L18 36 2 27zM9 12v11l9 5 9-5V12l-9 6z" fill="#c8252c" fillRule="evenodd" /></App36> },
  { name: "Firefox", running: true, art: <App36><defs><linearGradient id="ffa" x1="1" y1="0" x2="0" y2="1"><stop offset="0" stopColor="#ffe226" /><stop offset=".5" stopColor="#ff8a16" /><stop offset="1" stopColor="#e8185c" /></linearGradient></defs><path d="M22 0c4 4 12 9 12 19 0 9-7 16-16 16S1 28 1 19c0-6 2-10 5-13l3 4c3-3 9-2 10-4s1-4 3-6z" fill="url(#ffa)" /><circle cx="17" cy="18" r="8" fill="#7a3fe0" /><path d="M8 14c4-2 7 0 10 0 2 1 1 3-1 4-4 1-4 4-1 6-5 0-9-4-8-10z" fill="#ff9a1c" /></App36> },
  { name: "CTW Bot", art: <App36 bg="#03101f"><path d="M8 27V6h20v18M14 24V12M18 20V10M22 18v-6" fill="none" stroke="#e8f2fa" strokeWidth="1.800" /><path d="M19 9v14M14 13v8" stroke="#1d8fe0" strokeWidth="2" /><text x="18" y="33" textAnchor="middle" fontSize="6" fontWeight="700" fill="#fff" fontFamily="Liberation Sans">CTW BOT</text></App36> },
  { name: "Alexa", art: <App36 bg="#0a7be0"><circle cx="18" cy="18" r="12" fill="none" stroke="#19c8ff" strokeWidth="4" /><path d="M15 30c3 2 8 1 10-2" stroke="#0a7be0" strokeWidth="3" /></App36> },
  { name: "Sublime", art: <App36 bg="#4b4b4b"><path d="M27 6L9 12v8l9 3-9 3v6l18-6v-8l-9-3 9-3z" fill="#ff9800" /></App36> },
  { name: "HTTrack", art: <App36><rect width="36" height="21" fill="#8f8fd0" /><rect y="21" width="36" height="15" fill="#0a0a0a" /><text x="18" y="16" textAnchor="middle" fontSize="9" fontWeight="700" fill="#111" fontFamily="Liberation Sans">HTTrack</text><text x="18" y="28" textAnchor="middle" fontSize="6" fontWeight="700" fill="#fff" fontFamily="Liberation Sans">WEBSITE</text><text x="18" y="34" textAnchor="middle" fontSize="6" fontWeight="700" fill="#fff" fontFamily="Liberation Sans">COPIER</text></App36> },
  { name: "Zona", art: <App36><path d="M9 2h18l9 16-9 16H9L0 18z" fill="#17a9ec" /><path d="M10 5h12v7L11 29h6" fill="none" stroke="#fff" strokeWidth="2.500" /><path d="M19 14l6 15h-8" fill="none" stroke="#fff" strokeWidth="2.500" /></App36> },
  { name: "CTS", art: <App36 bg="#ffffff"><path d="M1 14l5-3M1 24l5-2" stroke="#e04848" strokeWidth="2.500" /><path d="M1 19l5-2" stroke="#38b058" strokeWidth="2.500" /><text x="21" y="24" textAnchor="middle" fontSize="14" fontWeight="700" fill="#b5b5b5" fontFamily="Liberation Sans">CTS</text></App36> },
  { name: "Calculator", art: <App36><rect x="4" width="28" height="36" rx="3" fill="#6e7a86" /><rect x="7" y="3" width="22" height="6" fill="#4fd6f5" /><g fill="#e5e9ed"><rect x="7" y="12" width="6" height="5" /><rect x="15" y="12" width="6" height="5" /><rect x="23" y="12" width="6" height="5" /><rect x="7" y="20" width="6" height="5" /><rect x="15" y="20" width="6" height="5" /><rect x="7" y="28" width="6" height="5" /><rect x="15" y="28" width="6" height="5" /></g><rect x="23" y="20" width="6" height="13" fill="#12427e" /></App36> },
  { name: "Chrome", art: <App36><circle cx="18" cy="18" r="18" fill="#2ba24c" /><path d="M18 9h15.600A18 18 0 0 1 18 36l8-14z" fill="#fbc116" /><path d="M2.400 9L10 22l8-4V9h15.600A18 18 0 0 0 2.400 9z" fill="#e33b2e" /><circle cx="18" cy="18" r="9" fill="#fff" /><circle cx="18" cy="18" r="7" fill="#3a7ded" /></App36> },
  { name: "Telegram", art: <App36><circle cx="18" cy="18" r="17" fill="#2aa1dc" /><path d="M7 18l20-8-4 17-6-4-3 3-1-6 10-8-12 7z" fill="#fff" /></App36> },
  { name: "Terminal", art: <App36><rect y="4" width="36" height="28" rx="3" fill="#3b3b3b" /><path d="M0 9V7a3 3 0 0 1 3-3h30a3 3 0 0 1 3 3v2z" fill="#8a8a8a" /><path d="M6 14l6 6-6 6M18 27h11" fill="none" stroke="#f0f0f0" strokeWidth="2.500" /></App36> },
  { name: "Docker", art: <App36><circle cx="18" cy="18" r="18" fill="#1d91ee" /><path d="M6 18h20c1-2 1-3 0-5 3 0 4 2 4 4 1 0 2 0 3 1-1 2-3 2-4 2-2 5-6 8-12 8-7 0-11-4-11-10z" fill="#fff" /><path d="M9 13h4v4H9zM14 13h4v4h-4zM19 13h4v4h-4zM14 8h4v4h-4zM19 8h4v4h-4z" fill="#fff" /></App36> },
  { name: "WPS", art: <App36 bg="#ff1722"><path d="M5 10h6l3 13 4-10 4 10 4-13h6" fill="none" stroke="#fff" strokeWidth="3.500" strokeLinejoin="round" /></App36> },
  { name: "XAMPP", art: <App36 bg="#f47a20"><path d="M12 9c-5 0-5 8 0 9-5 1-5 9 0 9 3 0 4-2 6-5 2 3 3 5 6 5 5 0 5-8 0-9 5-1 5-9 0-9-3 0-4 2-6 5-2-3-3-5-6-5z" fill="none" stroke="#fff" strokeWidth="4" /></App36> },
  { name: "Remote", art: <App36><circle cx="18" cy="18" r="17.500" fill="#ececec" /><path d="M16 1c10-1 18 7 18 15 0 7-3 11-8 14 2-9-1-15-8-15-6 0-9 5-10 14C-1 20 3 3 16 1z" fill="#e8242a" /><path d="M5 14C9 8 16 5 24 7" stroke="#f8a0a0" strokeWidth="1.500" fill="none" /></App36> },
  { name: "RDP", art: <App36><path d="M2 1l26 4v20L2 22z" fill="#0c1fd0" /><path d="M16 3l12 2v20l-8-1z" fill="#3f62f2" /><path d="M6 29l14-4 4 6-12 3z" fill="#c9c9c9" /><circle cx="26" cy="27" r="8.500" fill="#f0f0f0" stroke="#9a9a9a" /><path d="M22 24l4 3-4 3M31 22l-4 3 4 3" fill="none" stroke="#3aa03a" strokeWidth="1.800" /></App36> },
  { name: "Command Prompt", art: <App36><rect y="3" width="36" height="29" fill="#a9b0b6" /><rect x="2" y="7" width="32" height="23" fill="#000" /><text x="4" y="15" fontSize="7" fill="#fff" fontFamily="Liberation Mono">C:\_</text></App36> },
  { name: "Cat", art: <App36 bg="#02111f"><path d="M12 14l3 3h6l3-3v9c0 4-3 6-6 6s-6-2-6-6z" fill="#e8f0f6" /><circle cx="15.500" cy="22" r="1.300" fill="#02111f" /><circle cx="20.500" cy="22" r="1.300" fill="#02111f" /><path d="M18 6v9M15 9h6" stroke="#e8f0f6" strokeWidth="2" /></App36> },
  { name: "PostgreSQL", art: <App36><path d="M6 3c6-3 9 0 12 0 6-3 15-2 16 6 0 6-3 10-5 14l5 1c-2 3-6 3-9 2-1 5-1 9-5 9-5 0-5-7-5-12-4 4-7 2-9-4C2 13 0 5 6 3z" fill="#336791" stroke="#f2f5f8" strokeWidth="1.500" /><path d="M13 5c-2 6 0 12 2 18M22 5c4 4 3 12 1 19" fill="none" stroke="#e8eef4" strokeWidth="1.500" /></App36> },
  { name: "TradingView", running: true, art: <App36 bg="#101010"><path d="M4 11h12v15h-6v-9H4z" fill="#fff" /><circle cx="20" cy="14" r="3" fill="#fff" /><path d="M25 11h8l-6 15h-7z" fill="#fff" /></App36> },
  { name: "Editor", art: <App36><rect width="36" height="36" fill="#30c060" /><rect x="0" width="36" height="3" fill="#b8e020" /><rect y="33" width="36" height="3" fill="#2098e0" /><rect x="2" y="2" width="32" height="32" fill="#1e1e1e" /><path d="M17 9v6l-3 3 3 3v6L8 18zM19 9v6l3 3-3 3v6l9-9z" fill="#fff" /></App36> },
  { name: "Studio", art: <App36><rect width="36" height="36" fill="#9a10e0" /><path d="M12 4c-4 4-3 9 2 12M22 3c-6 7-8 20-6 29M17 17c8-8 8 2 0 3M22 16v12c6 2 8-6 2-7M8 20v12c7 0 7-5 1-6 6-1 5-6-1-6" fill="none" stroke="#fff" strokeWidth="3" /></App36> },
  { name: "VS Code", running: true, art: <App36><path d="M26 0l10 4v28l-10 4L9 19 3 24 0 22V14l3-2 6 5z" fill="#1f8ad2" /><path d="M26 10v16L15 18z" fill="#dcdde0" /><path d="M26 0l10 4v28l-10 4z" fill="#2ea5f0" /></App36> },
  { name: "MetaTrader 5", art: <App36><path d="M18 0c6 3 11 8 9 15H9C7 8 12 3 18 0z" fill="#3f9a4a" /><path d="M2 20c5-6 11-4 13 2l-2 12C5 36-1 28 2 20z" fill="#e8b92e" /><path d="M34 20c-5-6-11-4-13 2l2 12c8 2 14-6 11-14z" fill="#2a80c4" /><circle cx="18" cy="21" r="9" fill="#f4f4f0" /><text x="18" y="27" textAnchor="middle" fontSize="17" fontWeight="700" fill="#e0a020" fontFamily="Liberation Sans">5</text></App36> },
  { name: "GitHub Desktop", art: <App36><circle cx="18" cy="18" r="18" fill="#7a35a8" /><path d="M18 7c-3 0-4 1-5 1-2-1-3-2-4-2-1 2-1 4 0 5-2 2-2 5-1 8 1 4 4 5 7 5-1 1-1 2-1 3-2 1-4 0-5-2 0 3 2 5 5 5v4h8v-8c0-1 0-2-1-2 4 0 6-2 7-5 1-4 0-7-1-8 1-2 0-4 0-5-2 0-3 1-4 2-1 0-3-1-5-1z" fill="#f2eaf7" /></App36> },
];

function Taskbar() {
  return (
    <footer className="flex h-[71px] shrink-0 items-center border-t-2 border-[#b4b5b7] bg-[#dbdddf] text-[17px] text-[#1f1f1f]">
      <div className="flex w-[661px] items-center gap-[9px] pl-[30px]">
        <span className="relative flex">
          <svg viewBox="0 0 36 38" className="h-[38px] w-9" aria-hidden="true">
            <circle cx="16" cy="20" r="15" fill="#f18b1c" />
            <path d="M17 33a6 6 0 0 1 0-11 7 7 0 0 1 12 0 5.500 5.500 0 0 1 0 11z" fill="#b8d0f2" />
          </svg>
          <span className="absolute -top-2.5 left-3.5 flex size-6 items-center justify-center rounded-full bg-[#c42b1c] text-[15px] text-white">4</span>
        </span>
        <div className="pb-0.5">
          <p className="leading-6">31°C</p>
          <p className="leading-6 text-[#5a5a5a]">Mayorm. soleado</p>
        </div>
      </div>
      <button type="button" aria-label="Start" className="flex w-[66px] justify-center">
        <svg viewBox="0 0 36 36" className="size-[35px]" aria-hidden="true">
          <defs>
            <linearGradient id="win" x1="0" y1="0" x2="1" y2="1">
              <stop offset="0" stopColor="#5ccbfb" />
              <stop offset="1" stopColor="#0a74d6" />
            </linearGradient>
          </defs>
          <path d="M0 1a1 1 0 0 1 1-1h16v17H0zM19 0h16a1 1 0 0 1 1 1v16H19zM0 19h17v17H1a1 1 0 0 1-1-1zM19 19h17v16a1 1 0 0 1-1 1H19z" fill="url(#win)" />
        </svg>
      </button>
      <div className="ml-1.5 flex h-[47px] w-[328px] items-center rounded-full border-2 border-[#c6c8ca] bg-[#f5f5f6] pr-1.5 pl-4">
        <Search className="size-6 shrink-0 text-[#222]" strokeWidth={2} />
        <input aria-label="Buscar" placeholder="Buscar" className="ml-3.5 h-full w-0 flex-1 bg-transparent text-[19px] outline-none placeholder:text-[#666]" />
        <svg viewBox="0 0 72 38" className="h-[38px] w-[72px]" aria-hidden="true">
          <path d="M10 14C20-4 56-4 62 8l8 14c2 10-4 16-12 16H14C4 38 0 30 2 24z" fill="#b9dfe0" />
          <path d="M6 28L24 8l8 6 6-8 12 14 14 8v10H8z" fill="#a58a58" />
          <path d="M24 8l6 10-8 10-6-8zM38 6l6 14-8 10z" fill="#5b4b33" />
          <path d="M4 28c8-6 14 0 22-2s14 4 26-2 14 0 18 4-4 10-12 10H14C8 38 2 34 4 28z" fill="#d98b1f" />
          <path d="M20 34l10-6 10 6" stroke="#f2c14a" strokeWidth="2" fill="none" />
          <circle cx="12" cy="29" r="6" fill="#e8761c" />
          <circle cx="24" cy="33" r="5" fill="#c9481a" />
          <circle cx="57" cy="27" r="8" fill="#ef8a22" />
          <circle cx="44" cy="33" r="5" fill="#efb13a" />
          <path d="M57 19v16M52 21c-2 4-2 8 0 12M62 21c2 4 2 8 0 12" stroke="#c9581a" fill="none" />
        </svg>
      </div>
      <div className="ml-1 flex h-full items-center">
        {APPS.map((a) => (
          <button key={a.name} type="button" aria-label={a.name} className="relative flex h-full w-[66px] items-center justify-center">
            <span className={`flex h-[58px] w-[54px] items-center justify-center rounded-md ${a.active ? "border border-[#c4c6c8] bg-[#eff0f2]" : ""}`}>
              {a.art}
            </span>
            {a.active && <span className="absolute bottom-1.5 h-[5px] w-6 rounded-full bg-[#0a78d4]" />}
            {a.running && <span className="absolute bottom-1.5 h-[5px] w-[9px] rounded-full bg-[#7d7d7d]" />}
          </button>
        ))}
      </div>
      <span className="flex-1" />
      <div className="flex items-center pr-7">
        <button type="button" aria-label="Hidden icons"><ChevronUp className="size-7" strokeWidth={1.7} /></button>
        <svg viewBox="0 0 26 20" className="ml-[22px] h-5 w-[26px]" aria-hidden="true">
          <path d="M7 17a5.500 5.500 0 0 1-1-10.500 7.500 7.500 0 0 1 14-.5 5.700 5.700 0 0 1 0 11z" fill="#ececec" stroke="#1f1f1f" strokeWidth="1.500" />
          <path d="M6 7a7.300 7.300 0 0 1 13.500-.5L12 11zM2.500 13L9 8l3 3-8 5z" fill="#8c8c8c" />
          <path d="M5 1l18 18" stroke="#1f1f1f" strokeWidth="1.500" />
        </svg>
        <span className="ml-7">ESP</span>
        <Wifi className="ml-[30px] size-[26px]" strokeWidth={1.7} />
        <Volume2 className="ml-2.5 size-[25px]" strokeWidth={1.5} />
        <div className="ml-[26px] pb-0.5 text-right">
          <p className="leading-6">6:24 PM</p>
          <p className="leading-6">10/7/2025</p>
        </div>
      </div>
    </footer>
  );
}

export default function App() {
  return (
    <div className="flex h-screen flex-col overflow-hidden bg-[#3b3b3b] font-['Open_Sans',sans-serif]">
      <BrowserTop />
      <div className="grid min-h-0 flex-1 grid-cols-[2151fr_1667fr] grid-rows-[minmax(0,1fr)] gap-[9px] pr-1.5 pb-1.5 pl-[5px]">
        <Dashboard />
        <DevTools />
      </div>
      <Taskbar />
    </div>
  );
}
